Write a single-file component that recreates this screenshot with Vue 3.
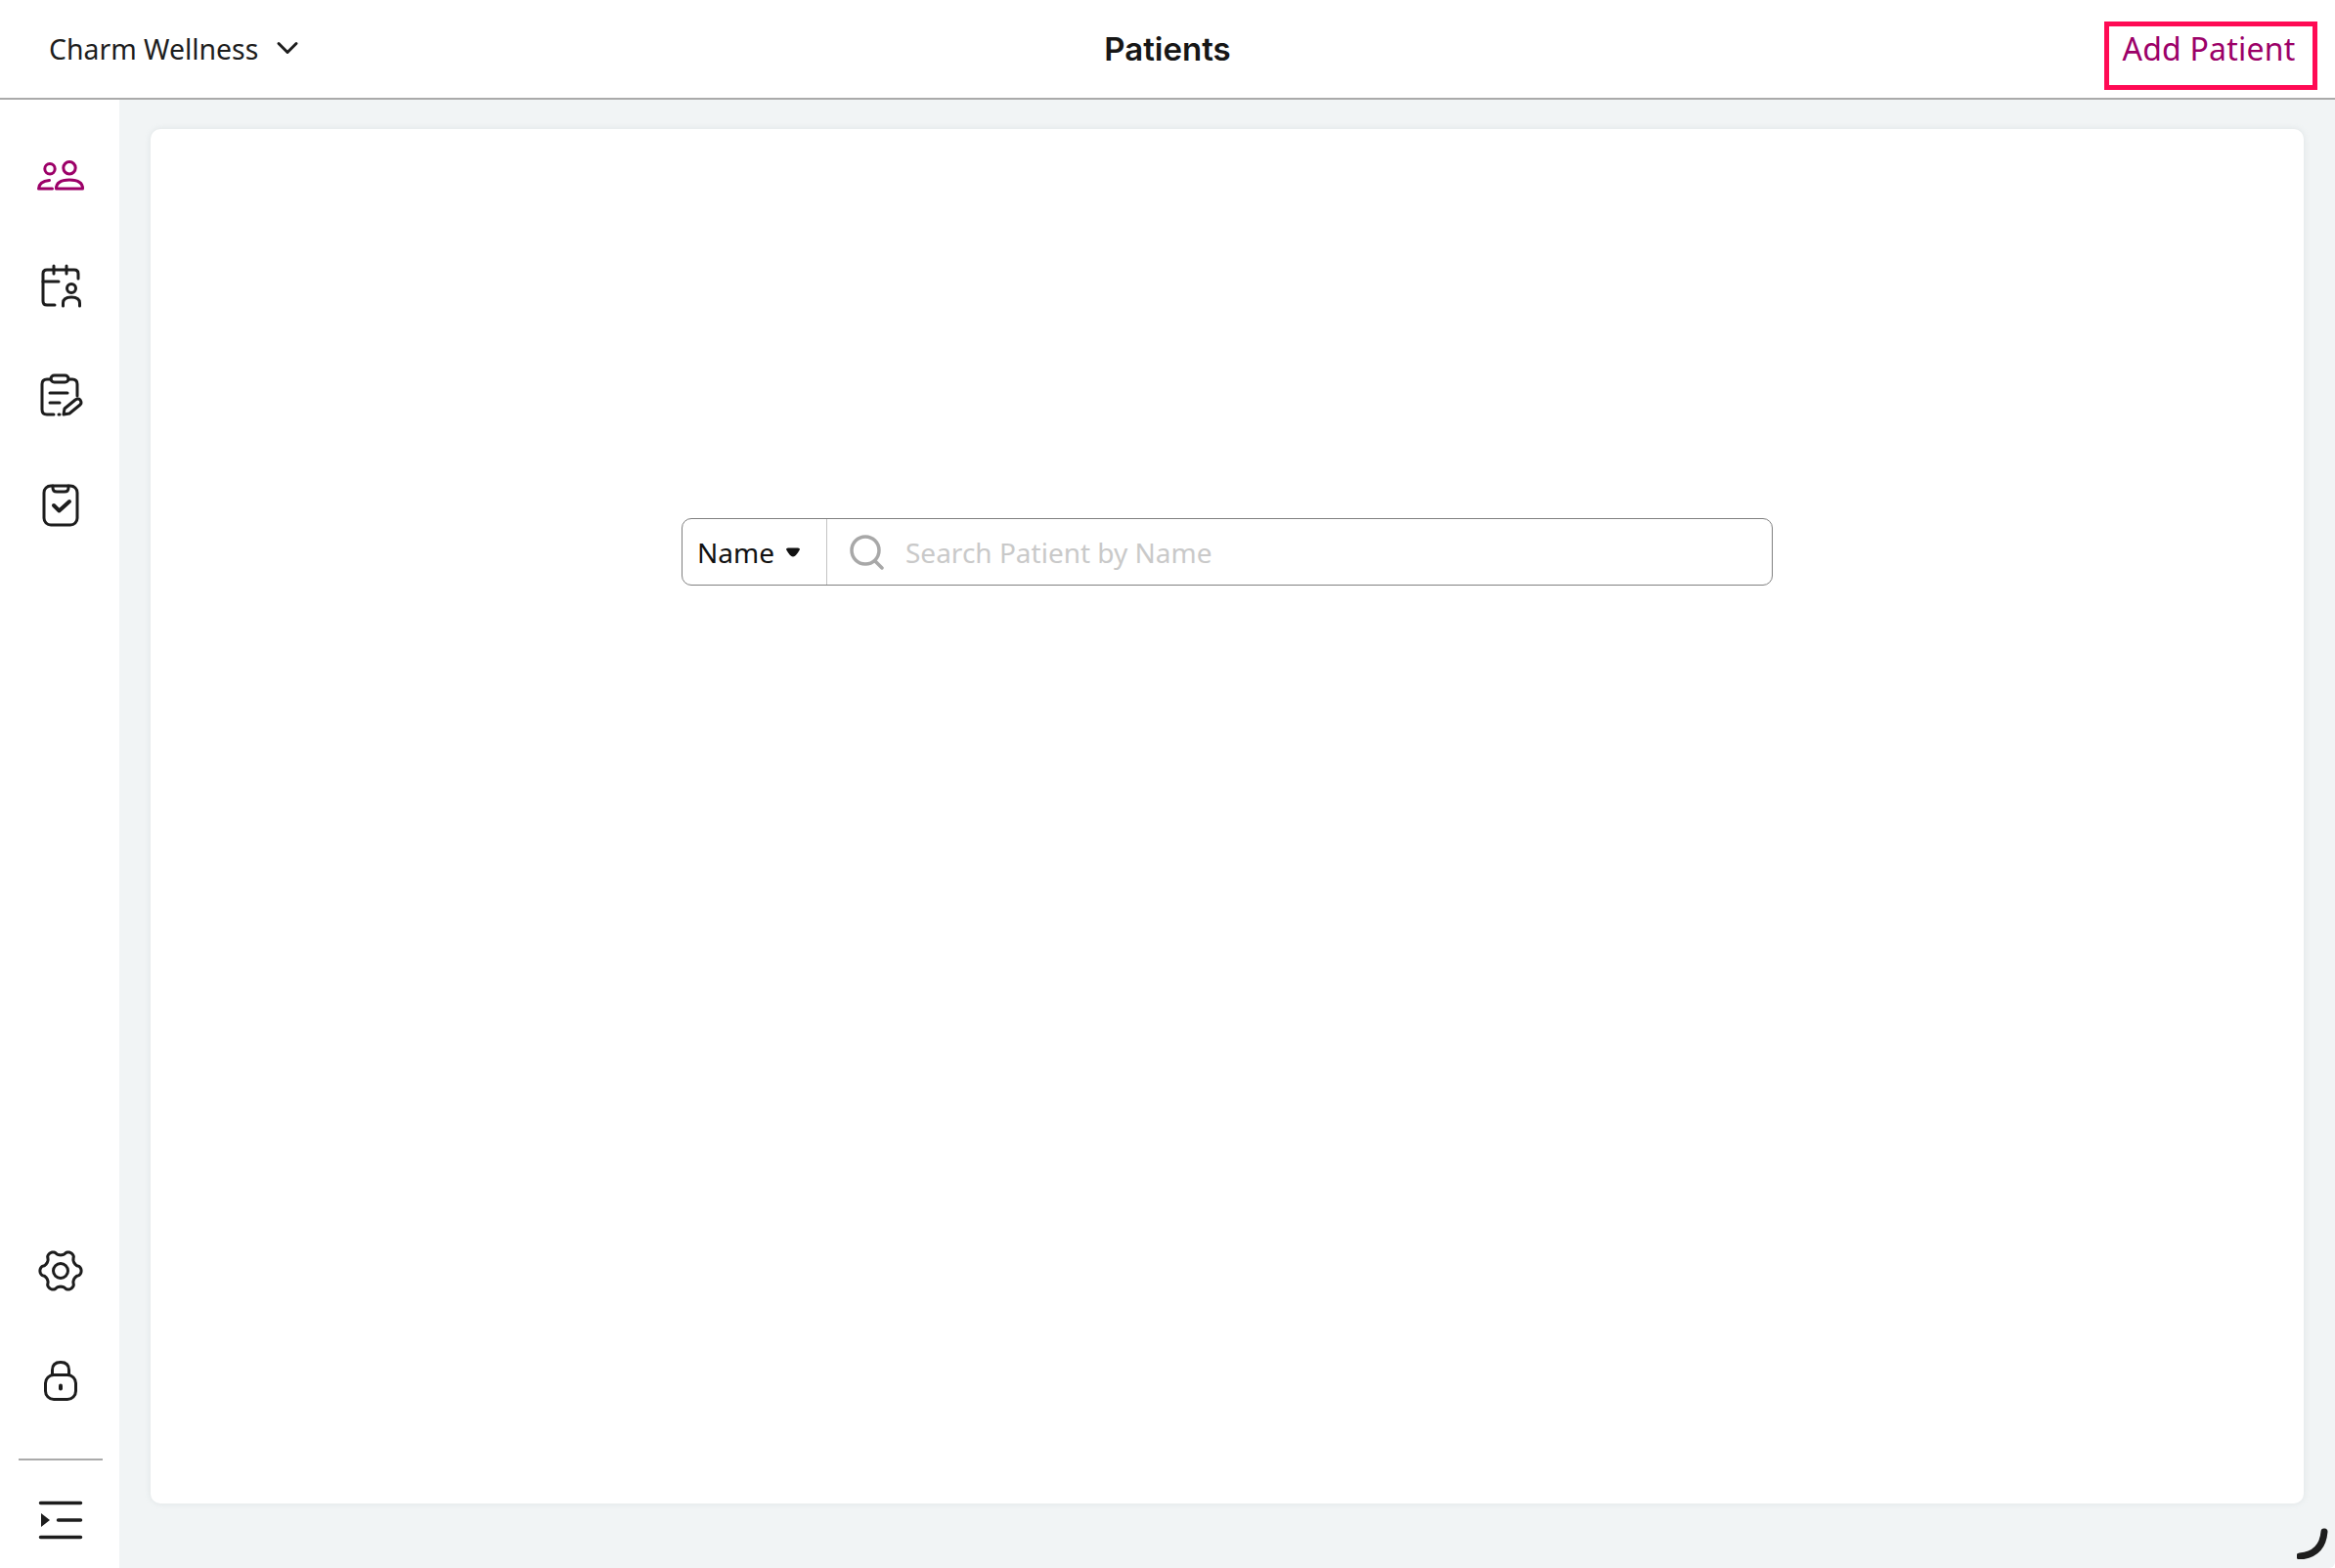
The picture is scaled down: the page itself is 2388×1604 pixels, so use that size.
<script setup>
const gearPoints = []
for (let i = 0; i < 144; i++) {
  const a = (i / 144) * Math.PI * 2
  const c = Math.cos(6 * a)
  const r = 18.6 + 2.5 * Math.sign(c) * Math.pow(Math.abs(c), 0.6)
  gearPoints.push(`${(24 + r * Math.cos(a)).toFixed(2)} ${(24 + r * Math.sin(a)).toFixed(2)}`)
}
const gearPath = 'M' + gearPoints.join('L') + 'Z'
</script>

<template>
  <div class="app">
    <header class="topbar">
      <div class="org">
        <span class="org-name">Charm Wellness</span>
        <svg class="org-chevron" viewBox="0 0 24 14"><path d="M3 2.5l9 9 9-9" /></svg>
      </div>
      <h1 class="title">Patients</h1>
      <div class="actions">
        <button class="add-btn">Add Patient</button>
      </div>
    </header>

    <div class="body">
      <nav class="sidebar">
        <div class="nav-group">
          <a class="nav-item active">
            <svg viewBox="0 0 48 48">
              <circle cx="13" cy="16.7" r="5.2" />
              <circle cx="33" cy="15.7" r="6.2" />
              <path d="M19.5 37Q19.5 28 33 28Q46.5 28 46.5 37Z" />
              <path d="M15.5 37H1.5Q2 29.5 12.5 28.5" />
            </svg>
          </a>
          <a class="nav-item">
            <svg viewBox="0 0 48 48">
              <path d="M18 44H10Q6 44 6 40V12Q6 8 10 8H38Q42 8 42 12V17" />
              <path d="M17 4V12M30 4V12M6 20H22" />
              <circle cx="35" cy="27" r="4.5" />
              <path d="M26.5 45V42Q26.5 36 35 36Q43.5 36 43.5 42V45" />
            </svg>
          </a>
          <a class="nav-item">
            <svg viewBox="0 0 48 48">
              <path d="M14 8H10Q5 8 5 13V39Q5 44 10 44H17M32 8H36Q41 8 41 13V25" />
              <rect x="14" y="4" width="18" height="7" rx="3.5" />
              <path d="M13 22H31M13 32H23M22 44H23" />
              <path d="M27 44L28 38L39 29Q42 27 44 29Q46 32 44 34L33 43Z" />
            </svg>
          </a>
          <a class="nav-item">
            <svg viewBox="0 0 48 48">
              <rect x="7" y="5" width="34" height="40" rx="7" />
              <path d="M16 5V7Q16 11 20 11H28Q32 11 32 7V5" />
              <path class="bolder" d="M17 25L22.5 30.5L33 21" />
            </svg>
          </a>
        </div>
        <div class="nav-group">
          <a class="nav-item">
            <svg viewBox="0 0 48 48">
              <path :d="gearPath" />
              <circle cx="24" cy="24" r="7.5" />
            </svg>
          </a>
          <a class="nav-item">
            <svg viewBox="0 0 48 48">
              <rect x="8.5" y="18.5" width="31" height="25" rx="8.5" />
              <path d="M15.5 18.5V13.5Q15.5 5.5 24 5.5Q32.5 5.5 32.5 13.5V18.5" />
              <path class="bolder" d="M24 29.5V32.5" />
            </svg>
          </a>
          <div class="nav-divider"></div>
          <a class="nav-item toggle">
            <svg viewBox="0 0 48 48">
              <path class="bold" d="M3.5 6.5H44.5M21.5 24H44.5M3.5 41.5H44.5" />
              <path class="fill" d="M4 17L13 24L4 31Z" />
            </svg>
          </a>
        </div>
      </nav>

      <main class="main">
        <section class="card">
          <div class="search">
            <div class="search-type">
              <span>Name</span>
              <svg class="caret" viewBox="0 0 16 10"><path d="M1 2Q1 .5 3 .5H13Q15 .5 15 2Q11 9.5 8 9.5Q5 9.5 1 2Z" /></svg>
            </div>
            <div class="search-field">
              <svg class="search-icon" viewBox="0 0 36 36">
                <circle cx="16" cy="16" r="14" />
                <path d="M26 27L33 34" />
              </svg>
              <span class="placeholder">Search Patient by Name</span>
            </div>
          </div>
        </section>
        <svg class="spinner" viewBox="0 0 32 32"><path d="M28 4Q26 27 3 29" /></svg>
      </main>
    </div>
  </div>
</template>

<style scoped>
.app {
  display: flex;
  flex-direction: column;
  width: 2388px;
  height: 1604px;
  font-family: "Noto Sans", "Open Sans", sans-serif;
  color: #1d1d1d;
  background: #fff;
  overflow: hidden;
}
.topbar {
  display: grid;
  grid-template-columns: 1fr auto 1fr;
  align-items: center;
  height: 102px;
  box-sizing: border-box;
  padding: 0 18px;
  border-bottom: 2px solid #aaaaaa;
  flex: none;
}
.org {
  display: flex;
  align-items: center;
  gap: 18px;
  padding-left: 32px;
}
.org-name {
  font-size: 28.4px;
}
.org-chevron {
  width: 24px;
  height: 14px;
  margin-top: -2px;
  fill: none;
  stroke: #1d1d1d;
  stroke-width: 3;
  stroke-linecap: round;
  stroke-linejoin: round;
}
.title {
  margin: 0;
  font-family: Inter, sans-serif;
  font-size: 33px;
  font-weight: 600;
  color: #161616;
}
.actions {
  display: flex;
  justify-content: flex-end;
  align-self: end;
  padding-bottom: 8px;
}
.add-btn {
  width: 218px;
  height: 70px;
  padding: 0 4px 16px 0;
  box-sizing: border-box;
  border: 5px solid #ff0a54;
  background: #fff;
  color: #9c0068;
  font-family: inherit;
  font-size: 32px;
  letter-spacing: 0.2px;
}
.body {
  display: flex;
  flex: 1;
  min-height: 0;
}
.sidebar {
  width: 122px;
  flex: none;
  display: flex;
  flex-direction: column;
  justify-content: space-between;
  padding: 22px 0 0 2px;
  box-sizing: border-box;
}
.nav-group {
  display: flex;
  flex-direction: column;
  align-items: center;
}
.nav-item {
  display: flex;
  align-items: center;
  justify-content: center;
  width: 100%;
  height: 112px;
  box-sizing: border-box;
}
.nav-item.toggle {
  height: 110px;
  padding-top: 12px;
}
.nav-item svg {
  width: 48px;
  height: 48px;
  fill: none;
  stroke: #1d1d1d;
  stroke-width: 3;
  stroke-linecap: round;
  stroke-linejoin: round;
}
.nav-item.active svg {
  stroke: #9c0068;
}
.nav-item .bold {
  stroke-width: 3.5;
}
.nav-item .bolder {
  stroke-width: 4;
}
.nav-item .fill {
  fill: #1d1d1d;
  stroke: none;
}
.nav-divider {
  width: 86px;
  height: 2px;
  margin-top: 24px;
  background: #aaaaaa;
}
.main {
  position: relative;
  flex: 1;
  display: flex;
  padding: 30px 32px 66px 32px;
  background: #f1f4f5;
  border-bottom-right-radius: 6px;
  min-width: 0;
}
.card {
  flex: 1;
  display: flex;
  justify-content: center;
  align-items: flex-start;
  padding-top: 398px;
  background: #fff;
  border-radius: 10px;
  box-shadow: 0 0 6px rgba(150, 165, 170, 0.2);
}
.search {
  display: flex;
  width: 1116px;
  height: 69px;
  box-sizing: border-box;
  border: 1.5px solid #808080;
  border-radius: 10px;
  background: #fff;
}
.search-type {
  display: flex;
  align-items: center;
  gap: 11px;
  width: 148px;
  box-sizing: border-box;
  padding-left: 15px;
  border-right: 1.5px solid #c4c4c4;
  font-size: 28px;
  color: #111;
}
.caret {
  width: 16px;
  height: 10px;
  fill: #111;
}
.search-field {
  display: flex;
  align-items: center;
  gap: 21px;
  padding-left: 23px;
}
.search-icon {
  width: 36px;
  height: 36px;
  fill: none;
  stroke: #a8a8a8;
  stroke-width: 3.5;
  stroke-linecap: round;
}
.placeholder {
  font-size: 28px;
  color: #c9c9c9;
}
.spinner {
  position: absolute;
  right: 7px;
  bottom: 9px;
  width: 32px;
  height: 32px;
  fill: none;
  stroke: #1d1d1d;
  stroke-width: 7;
  stroke-linecap: round;
}
</style>
